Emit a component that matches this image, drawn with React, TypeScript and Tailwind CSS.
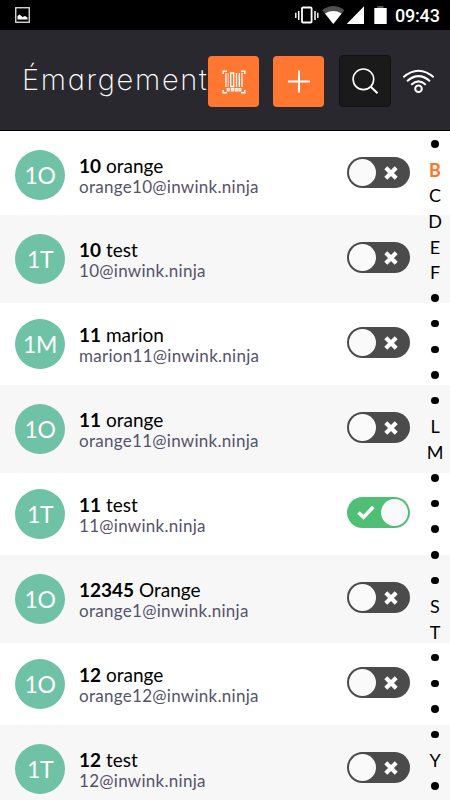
import { useState } from "react";

interface Guest {
  initials: string;
  first: string;
  last: string;
  email: string;
  present: boolean;
}

const GUESTS: Guest[] = [
  { initials: "1O", first: "10",    last: "orange", email: "orange10@inwink.ninja", present: false },
  { initials: "1T", first: "10",    last: "test",   email: "10@inwink.ninja",       present: false },
  { initials: "1M", first: "11",    last: "marion", email: "marion11@inwink.ninja", present: false },
  { initials: "1O", first: "11",    last: "orange", email: "orange11@inwink.ninja", present: false },
  { initials: "1T", first: "11",    last: "test",   email: "11@inwink.ninja",       present: true },
  { initials: "1O", first: "12345", last: "Orange", email: "orange1@inwink.ninja",  present: false },
  { initials: "1O", first: "12",    last: "orange", email: "orange12@inwink.ninja", present: false },
  { initials: "1T", first: "12",    last: "test",   email: "12@inwink.ninja",       present: false },
];

const INDEX = ".BCDEF.....LM.....ST....Y.".split("");

function StatusBar() {
  return (
    <div className="flex h-[30px] shrink-0 items-center bg-black pl-[15px] pr-[10px]">
      <svg width="15" height="16" viewBox="0 0 15 16">
        <rect x="0.75" y="0.75" width="13.5" height="14.5" fill="none" stroke="#e5e5e5" strokeWidth="1.3" />
        <path d="M2.5 12.5V9l2-1.5 3 2.5 2.5-1 2.5 1.5v2z" fill="#fff" />
      </svg>
      <div className="ml-auto flex items-center">
        <svg width="94" height="20" viewBox="294 5 94 20">
          <g fill="none" stroke="#fff">
            <rect x="302" y="7.5" width="9.6" height="15" rx="1" strokeWidth="1.8" />
            <path d="M298.7 11v9M315 11v9" strokeWidth="1.5" />
            <path d="M295.8 12.8v5.2M317.8 12.8v5.2" strokeWidth="1.4" />
          </g>
          <path d="M333.3 24 322.3 10.2Q333.3 2 344.3 10.2z" fill="#505050" />
          <path d="M333.3 24 325 13.4Q333.3 8.8 341.6 13.4z" fill="#fff" />
          <path d="M346.7 24H364V6.3z" fill="#fff" />
          <path d="M377.3 6h6.2v2h-6.2z" fill="#555" />
          <path d="M374.3 8h12.4v16h-12.4z" fill="#fff" />
        </svg>
        <span className="ml-[7px] mt-px w-[45px] whitespace-nowrap font-['Roboto',sans-serif] text-[18px] font-medium leading-5 tracking-[-0.2px] text-white">
          09:43
        </span>
      </div>
    </div>
  );
}

function BarcodeIcon() {
  return (
    <svg width="24" height="24" viewBox="0 0 24 24" fill="none" stroke="#fff">
      <path d="M5 1.2H1.2V4M19 1.2h3.8V4M1.2 20v2.8H5M22.8 20v2.8H19" strokeWidth="1.5" />
      <path d="M4 3v14M14.5 3v14M17.3 3v14M20 3v14" strokeWidth="1.3" />
      <path d="M6.2 3v14" strokeWidth="0.8" />
      <path d="M8.7 3h3v13.5h-3z" strokeWidth="1.3" />
      <path d="M5.3 18.7h1.8v2.2h-1.8zM9.5 18.7h1.8v2.2h-1.8zM13.3 18.7h1.8v2.2h-1.8zM17 18.7h1.8v2.2H17z" strokeWidth="1.3" />
    </svg>
  );
}

function Header() {
  return (
    <header className="flex h-[101px] shrink-0 items-start border-b border-black bg-[#29282f] pl-[22px]">
      <h1 className="mt-[28px] w-[186px] whitespace-nowrap font-['Inter',sans-serif] text-[29px] font-extralight leading-[44px] tracking-[1.7px] text-white [font-feature-settings:'cv11']">
        Émargement
      </h1>
      <button className="mt-[26px] flex size-[51px] items-center justify-center rounded bg-[#ff7731]">
        <BarcodeIcon />
      </button>
      <button className="ml-[14px] mt-[26px] flex size-[51px] items-center justify-center rounded bg-[#ff7731]">
        <svg width="24" height="24" viewBox="0 0 24 24" stroke="#fff" strokeWidth="2">
          <path d="M1 11.5h22M12 0.5v22" />
        </svg>
      </button>
      <button className="ml-[15px] mt-[25px] flex size-[52px] items-center justify-center rounded border border-[#111] bg-[#1a1a1b]">
        <svg width="28" height="28" viewBox="0 0 28 28" fill="none" stroke="#fff" strokeWidth="1.6">
          <circle cx="12.4" cy="12.3" r="10.3" />
          <path d="m19.5 19.5 7 6.8" strokeWidth="2" />
        </svg>
      </button>
      <svg className="ml-[11px] mt-[39px]" width="33" height="25" viewBox="0 0 33 25" fill="none" stroke="#fff" strokeWidth="2">
        <path d="M1.3 8.3Q16.5-4.7 31.7 8.3" />
        <path d="M5 12.3Q16.5 2 28 12.3" />
        <path d="M9.2 15.8Q16.5 9 23.8 15.8" />
        <circle cx="16.5" cy="19.8" r="3.3" />
      </svg>
    </header>
  );
}

function Toggle({ on, onClick }: { on: boolean; onClick: () => void }) {
  return (
    <button
      onClick={onClick}
      className={`ml-auto mr-[40px] mt-[8px] flex h-[31px] w-[63px] shrink-0 items-center justify-between rounded-full px-[2px] group-first:mt-[7px] ${
        on ? "flex-row-reverse bg-[#4fbf75]" : "bg-[#4b4b4b]"
      }`}
    >
      <span className="size-[27px] rounded-full bg-[#fafafa]" />
      {on ? (
        <svg className="ml-[8px]" width="18" height="15" viewBox="0 0 18 15" fill="none" stroke="#fff" strokeWidth="3.6">
          <path d="m1.5 7.5 5 4.7L16.3 2" />
        </svg>
      ) : (
        <svg className="mr-[10px]" width="14" height="14" viewBox="0 0 14 14" stroke="#fff" strokeWidth="4.2">
          <path d="m1.8 1.8 10.4 10.4M12.2 1.8 1.8 12.2" />
        </svg>
      )}
    </button>
  );
}

export default function App() {
  const [guests, setGuests] = useState(GUESTS);

  const toggle = (i: number) =>
    setGuests(guests.map((g, n) => (n === i ? { ...g, present: !g.present } : g)));

  return (
    <div className="flex h-[800px] w-[450px] flex-col overflow-hidden bg-white font-['Lato',sans-serif]">
      <StatusBar />
      <Header />

      <main className="relative min-h-0 flex-1 overflow-hidden">
        <ul>
          {guests.map((guest, i) => (
            <li
              key={guest.email}
              className="group flex h-[82px] items-start pl-[15px] pt-[16px] first:h-[84px] first:pt-[19px] even:h-[88px] even:bg-[#f7f7f7] even:pt-[19px]"
            >
              <span className="flex size-[50px] shrink-0 items-center justify-center rounded-full bg-[#6fc2a5] text-[23px] leading-none tracking-[-0.4px] text-white">
                {guest.initials}
              </span>
              <div className="ml-[14px] mt-[5px] whitespace-nowrap">
                <p className="text-[19px] leading-[21px] text-black">
                  <b>{guest.first}</b> {guest.last}
                </p>
                <p className="text-[17px] leading-[21px] tracking-[0.28px] text-[#55526b]">{guest.email}</p>
              </div>
              <Toggle on={guest.present} onClick={() => toggle(i)} />
            </li>
          ))}
        </ul>

        {/* Alphabet shortcut */}
        <nav className="absolute right-0 top-0 flex w-[30px] flex-col items-center">
          {INDEX.map((letter, i) => (
            <a
              key={i}
              className={`flex h-[25.7px] w-full items-center justify-center text-[18px] leading-none ${
                letter === "B" ? "font-bold text-[#ff7420]" : "text-black"
              }`}
            >
              {letter === "." ? <span className="size-[7.5px] rounded-full bg-black" /> : letter}
            </a>
          ))}
        </nav>
      </main>
    </div>
  );
}
